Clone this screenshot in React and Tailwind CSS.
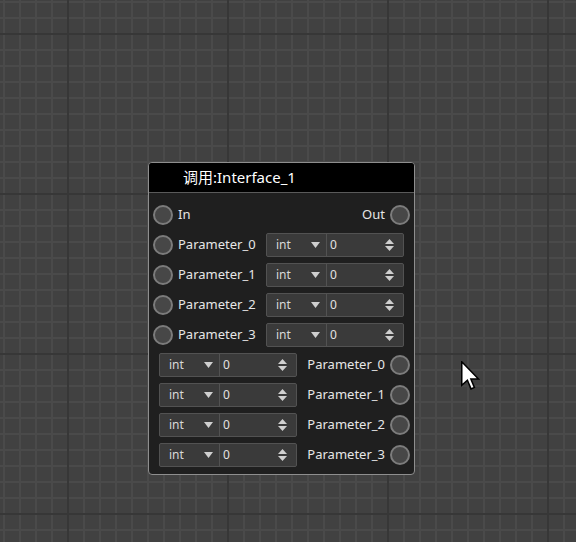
import React from "react";

const font = { fontFamily: '"Noto Sans", "Noto Sans CJK SC", sans-serif' };

function Port() {
  return <div className="w-5 h-5 shrink-0 rounded-full border-2 border-[#7c7c7c] bg-[#474747]" />;
}

function Widget() {
  return (
    <div className="flex h-6 w-[138px] shrink-0 rounded-[2px] border border-[#525252] bg-[#3a3a3a]">
      <div className="flex w-[60px] items-center justify-between border-r border-[#525252] pl-[9px] pr-[6px]">
        <span className="text-[12px] leading-none text-[#d8d8d8]">int</span>
        <svg width="9" height="6" viewBox="0 0 9 6">
          <path d="M0 0 L9 0 L4.5 6 Z" fill="#cfcfcf" />
        </svg>
      </div>
      <div className="flex flex-1 items-center justify-between pl-[3px] pr-[9px]">
        <span className="text-[12px] leading-none text-[#e2e2e2]">0</span>
        <svg width="9" height="12" viewBox="0 0 9 12">
          <path d="M0 5 L9 5 L4.5 0 Z" fill="#cfcfcf" />
          <path d="M0 7 L9 7 L4.5 12 Z" fill="#cfcfcf" />
        </svg>
      </div>
    </div>
  );
}

export default function App() {
  const params = ["Parameter_0", "Parameter_1", "Parameter_2", "Parameter_3"];
  return (
    <div
      className="relative w-[576px] h-[542px] overflow-hidden bg-[#414141] [background-image:linear-gradient(to_right,#373737_2px,transparent_2px),linear-gradient(to_bottom,#373737_2px,transparent_2px),linear-gradient(to_right,#4a4a4a_2px,transparent_2px),linear-gradient(to_bottom,#4a4a4a_2px,transparent_2px)] [background-size:160px_160px,160px_160px,16px_16px,16px_16px] [background-position:67px_0,0_33px,3px_0,0_1px]"
      style={font}
    >
      <div className="absolute left-[148px] top-[162px] w-[267px] rounded-[4px] border border-[#8e8e8e] bg-[#1f1f1f] overflow-hidden">
        <div className="flex h-[30px] items-center bg-black pl-[34px] border-b border-[#5a5a5a]">
          <span className="text-[15px] text-white leading-none">调用:Interface_1</span>
        </div>
        <div className="flex flex-col pl-[4px] pr-[4px] pt-[7px] pb-[4px] text-[13px] text-[#e6e6e6]">
          <div className="flex h-[30px] items-center">
            <Port />
            <span className="ml-[5px]">In</span>
            <span className="ml-auto mr-[5px]">Out</span>
            <Port />
          </div>
          {params.map((p) => (
            <div key={"l" + p} className="flex h-[30px] items-center">
              <Port />
              <span className="ml-[5px]">{p}</span>
              <div className="ml-auto mr-[6px]">
                <Widget />
              </div>
            </div>
          ))}
          {params.map((p) => (
            <div key={"r" + p} className="flex h-[30px] items-center">
              <div className="ml-[6px]">
                <Widget />
              </div>
              <span className="ml-auto mr-[5px]">{p}</span>
              <Port />
            </div>
          ))}
        </div>
      </div>
      <svg className="absolute left-[461px] top-[361px]" width="19" height="29" viewBox="0 0 12.5 19">
        <path
          d="M0.5 0.5 L0.5 16 L4.2 12.6 L6.6 18.3 L8.8 17.3 L6.5 11.8 L11.5 11.8 Z"
          fill="#ffffff"
          stroke="#000000"
          strokeWidth="1"
          strokeLinejoin="miter"
        />
      </svg>
    </div>
  );
}
